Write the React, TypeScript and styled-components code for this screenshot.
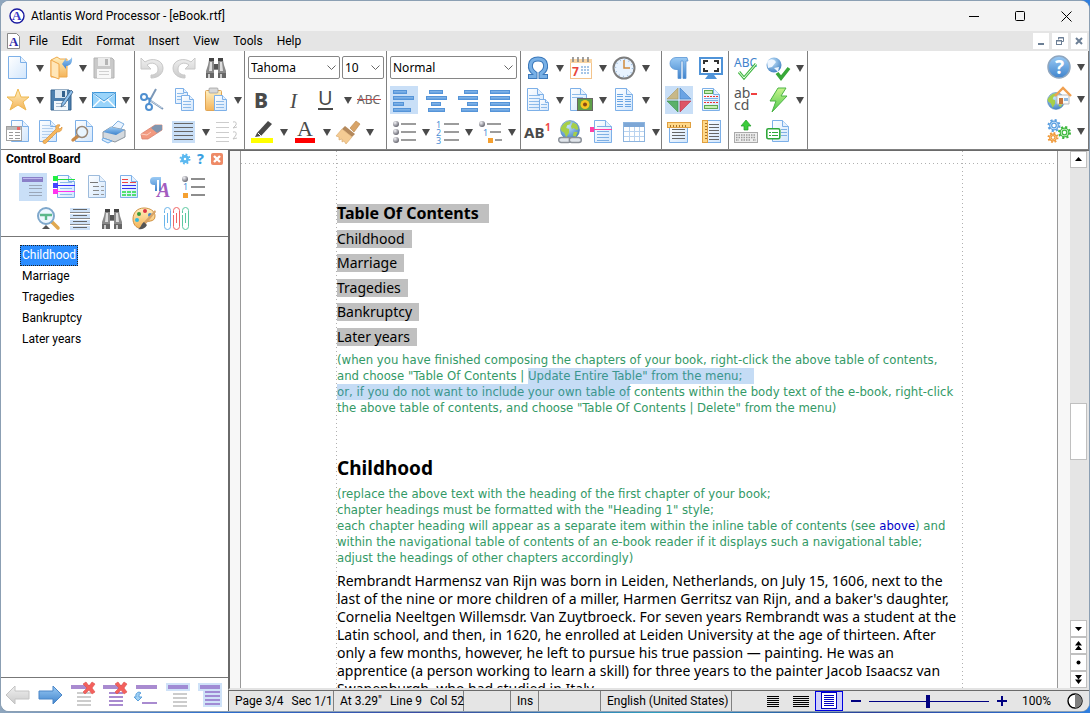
import React from "react";
import styled, { createGlobalStyle } from "styled-components";

const GlobalStyle = createGlobalStyle`
  * { box-sizing: border-box; }
  body {
    margin: 0;
    font-family: Roboto, "Noto Sans", sans-serif;
    font-size: 12px;
    color: #000;
    background: linear-gradient(90deg, #8fa6bd, #2c6fd0 20%, #3c4aa0 40%, #2f9fc0 60%, #2b3f9a 80%, #2f7fe0);
  }
  button, select, input { font: inherit; color: inherit; margin: 0; }
  button { border: 0; padding: 0; background: none; }
  svg { display: block; overflow: visible; }
`;

/* ---------- window frame ---------- */

const Desktop = styled.div`
  height: 100vh;
  padding: 1px 1px 2px;
  display: flex;
`;
const Window = styled.div`
  flex: 1;
  min-width: 0;
  display: flex;
  flex-direction: column;
  background: #fff;
  border-radius: 8px;
  overflow: hidden;
  box-shadow: 0 0 0 1px #8b9fb3;
`;
const TitleBar = styled.header`
  height: 30px;
  flex: none;
  display: flex;
  align-items: center;
  background: #f3f3f3;
  padding-left: 8px;
`;
const Title = styled.h1`
  flex: 1;
  margin: 0 0 0 6px;
  font-size: 12px;
  font-weight: 400;
  white-space: nowrap;
`;
const CaptionButton = styled.button`
  width: 46px;
  height: 30px;
  display: grid;
  place-items: center;
`;
const MenuBar = styled.nav`
  height: 20px;
  flex: none;
  display: flex;
  align-items: center;
  background: #e5e5e5;
  padding: 0 2px 0 5px;
`;
const MenuButton = styled.button`
  padding: 0 7px;
  line-height: 18px;
`;
const Spacer = styled.div`
  flex: 1;
`;
const ChildButton = styled.button`
  width: 16px;
  height: 16px;
  margin-left: 3px;
  background: #fff;
  display: grid;
  place-items: center;
`;

/* ---------- toolbars ---------- */

const Ribbon = styled.div`
  height: 99px;
  flex: none;
  display: flex;
  border-bottom: 1px solid #808080;
  border-right: 1px solid #777;
`;
const Group = styled.div<{ $width: number }>`
  flex: 0 0 ${(p) => p.$width}px;
  min-width: 0;
  padding: 1px 0 0 3px;
  border-right: 1px solid #808080;
`;
const Tools = styled.div`
  display: flex;
  align-items: center;
  height: 32px;
`;
const ToolCell = styled.div<{ $menu?: boolean }>`
  display: flex;
  align-items: center;
  flex: 0 0 ${(p) => (p.$menu ? 43 : 32)}px;
`;
const ToolButton = styled.button<{ $on?: boolean }>`
  width: 28px;
  height: 28px;
  display: grid;
  place-items: center;
  background: ${(p) => (p.$on ? "#c9dff7" : "transparent")};
`;
const DropButton = styled.button`
  width: 15px;
  height: 28px;
  display: grid;
  place-items: center;
`;
const Pickers = styled.div`
  display: flex;
  gap: 2px;
  height: 32px;
  padding-top: 4px;
`;
const SelectBox = styled.div<{ $width: number }>`
  position: relative;
  flex: 0 0 ${(p) => p.$width}px;
`;
const SelectInput = styled.select`
  appearance: none;
  width: 100%;
  height: 23px;
  padding: 0 0 0 2px;
  border: 1px solid #868686;
  border-radius: 2px;
  background: #fff;
  font-family: "Noto Sans", sans-serif;
`;
const SelectChevron = styled.svg`
  position: absolute;
  right: 4px;
  top: 9px;
  pointer-events: none;
`;

/* ---------- main area ---------- */

const Main = styled.div`
  flex: 1;
  min-height: 0;
  display: flex;
`;
const Sidebar = styled.aside`
  flex: 0 0 227px;
  display: flex;
  flex-direction: column;
  background: #fff;
`;
const SideHeader = styled.div`
  display: flex;
  align-items: center;
  height: 21px;
  padding: 0 3px 3px 5px;
`;
const SideTitle = styled.h2`
  flex: 1;
  margin: 0;
  font-size: 12px;
  font-weight: 700;
`;
const SmallButton = styled.button`
  width: 16px;
  height: 16px;
  display: grid;
  place-items: center;
`;
const SideTools = styled.div`
  padding: 0 0 1px 18px;
  border-bottom: 1px solid #777;
  & > :last-child { padding-left: 15px; }
`;
const List = styled.ul`
  flex: 1;
  list-style: none;
  margin: 0;
  padding: 8px 0 0 19px;
`;
const ListItem = styled.li`
  display: flex;
`;
const ListLink = styled.a<{ $on?: boolean }>`
  height: 21px;
  line-height: 19px;
  padding: 0 1px;
  border: 1px dotted ${(p) => (p.$on ? "#222" : "transparent")};
  color: ${(p) => (p.$on ? "#fff" : "#000")};
  background: ${(p) => (p.$on ? "#2a8cff" : "transparent")};
  text-decoration: none;
`;
const SideFooter = styled.div`
  display: flex;
  height: 34px;
  padding-left: 3px;
  align-items: center;
  border-top: 1px solid #777;
`;
const Content = styled.div`
  flex: 1;
  min-width: 0;
  display: flex;
  flex-direction: column;
`;
const Workspace = styled.div`
  flex: 1;
  min-height: 0;
  display: flex;
  border-left: 2px solid #6a6a6a;
  border-top: 1px solid #6a6a6a;
  border-bottom: 2px solid #e3e3e3;
`;
const Canvas = styled.div`
  flex: 1;
  min-width: 0;
  overflow: hidden;
  padding: 0 12px 0 10px;
  background: #f7f7f7;
`;
const Page = styled.div`
  min-height: 100%;
  padding: 0 94px 0 95px;
  background: #fff repeating-linear-gradient(90deg, #b0b0b0 0 1px, transparent 1px 4px) 0 12px / 100% 1px no-repeat;
  border: solid #999;
  border-width: 0 1px;
`;
const PageBody = styled.article`
  --dots: repeating-linear-gradient(#b0b0b0 0 1px, transparent 1px 4px);
  padding: 53px 0 0 1px;
  background: var(--dots) 0 0 / 1px 100% no-repeat, var(--dots) 100% 0 / 1px 100% no-repeat;
  white-space: nowrap;
  font-family: "Noto Sans", sans-serif;
  font-size: 14px;
`;
const Field = styled.span`
  background: #c0c0c0;
  display: block;
  width: max-content;
`;
const TocTitle = styled.h2`
  margin: 0;
  font-size: 16px;
  line-height: 19px;
  ${Field} { padding-right: 10px; }
`;
const Toc = styled.div`
  line-height: 18px;
  ${Field} { padding-right: 7px; margin-top: 7px; }
  ${Field}:nth-child(even) { margin-top: 6px; }
`;
const Note = styled.p`
  margin: 6px 0 0;
  font-family: "DejaVu Sans Condensed", "DejaVu Sans", sans-serif;
  font-size: 13px;
  line-height: 16px;
  color: #339966;
`;
const Marked = styled.mark<{ $tail?: boolean }>`
  display: inline-block;
  height: 16px;
  background: #c5dcf5;
  color: #3a958e;
  padding-right: ${(p) => (p.$tail ? 12 : 0)}px;
`;
const CrossRef = styled.a`
  color: #0000c8;
  text-decoration: none;
`;
const Heading = styled.h2`
  margin: 40px 0 0;
  font-size: 19px;
  line-height: 24px;
`;
const Paragraph = styled.p`
  margin: 6px 0 0;
  line-height: 18px;
`;
const ScrollBar = styled.div`
  flex: 0 0 19px;
  display: flex;
  flex-direction: column;
  background: #e5e5e5;
`;
const ScrollButton = styled.button`
  width: 17px;
  height: 17px;
  background: #fff;
  border: 1px solid #c0c0c0;
  display: grid;
  place-items: center;
`;
const Track = styled.div`
  flex: 1;
  display: grid;
  grid-template-rows: 235fr 57px 160fr;
`;
const Thumb = styled.div`
  grid-row: 2;
  width: 17px;
  background: #fff;
  border: 1px solid #c0c0c0;
`;

/* ---------- status bar ---------- */

const StatusBar = styled.footer`
  flex: none;
  height: 21px;
  display: flex;
  align-items: stretch;
  background: #e5e5e5;
  border-top: 1px solid #6a6a6a;
  border-left: 1px solid #6a6a6a;
`;
const StatusCell = styled.div<{ $width: number }>`
  flex: 0 0 ${(p) => p.$width}px;
  min-width: 0;
  display: flex;
  align-items: center;
  gap: 8px;
  padding-left: 6px;
  border-right: 1px solid #808080;
  white-space: nowrap;
`;
const ViewButton = styled.button<{ $on?: boolean }>`
  width: 28px;
  display: grid;
  place-items: center;
  background: ${(p) => (p.$on ? "#cfcffa" : "transparent")};
  outline: ${(p) => (p.$on ? "1px solid #0000e0" : "0")};
  outline-offset: -1px;
`;
const ZoomButton = styled.button`
  width: 26px;
  display: grid;
  place-items: center;
`;
const ZoomSlider = styled.input`
  appearance: none;
  align-self: center;
  width: 120px;
  height: 14px;
  background: linear-gradient(#000080, #000080) 0 50% / 100% 1px no-repeat;
  &::-webkit-slider-thumb {
    appearance: none;
    width: 4px;
    height: 13px;
    background: #000080;
  }
`;
const ZoomValue = styled.output`
  align-self: center;
  width: 46px;
  padding-left: 7px;
`;
const ContrastButton = styled.button`
  width: 28px;
  display: grid;
  place-items: center;
`;

/* ---------- icon drawings ---------- */

const BLUE = "#6aa5e3";
const GREY = "#8d8d8d";

const Svg = ({ children, size = 24 }: { children: React.ReactNode; size?: number }) => (
  <svg width={size} height={size} viewBox={`0 0 ${size} ${size}`} fill="none" aria-hidden="true">
    {children}
  </svg>
);

const DefsSvg = styled.svg`
  position: absolute;
`;
const Defs = () => (
  <DefsSvg width="0" height="0" aria-hidden="true">
    <defs>
      <linearGradient id="paper" x1="0" y1="0" x2="1" y2="1">
        <stop offset="0" stopColor="#fff" /><stop offset="1" stopColor="#d2e6fc" />
      </linearGradient>
      <linearGradient id="blue" x1="0" y1="0" x2="0" y2="1">
        <stop offset="0" stopColor="#9bcbf5" /><stop offset="1" stopColor="#3f83cc" />
      </linearGradient>
      <linearGradient id="gold" x1="0" y1="0" x2="0" y2="1">
        <stop offset="0" stopColor="#fff0c0" /><stop offset="1" stopColor="#f4b45a" />
      </linearGradient>
      <linearGradient id="silver" x1="0" y1="0" x2="0" y2="1">
        <stop offset="0" stopColor="#f0f0f0" /><stop offset="1" stopColor="#cacaca" />
      </linearGradient>
      <linearGradient id="green" x1="0" y1="0" x2="0" y2="1">
        <stop offset="0" stopColor="#c8f48c" /><stop offset="1" stopColor="#4cc84a" />
      </linearGradient>
      <linearGradient id="bar" x1="0" y1="0" x2="0" y2="1">
        <stop offset="0" stopColor="#8fbdea" /><stop offset="1" stopColor="#5b9ade" />
      </linearGradient>
      <radialGradient id="ball" cx="0.35" cy="0.3" r="0.8">
        <stop offset="0" stopColor="#f4f4f8" /><stop offset="1" stopColor="#55555f" />
      </radialGradient>
      <radialGradient id="sea" cx="0.4" cy="0.3" r="0.8">
        <stop offset="0" stopColor="#c4e4fb" /><stop offset="1" stopColor="#3577bd" />
      </radialGradient>
    </defs>
  </DefsSvg>
);

type DocProps = { x?: number; y?: number; w?: number; h?: number; stroke?: string };
const Doc = ({ x = 3, y = 1, w = 18, h = 22, stroke = "#7db0e8" }: DocProps) => {
  const f = Math.min(6, Math.round(w / 3));
  return (
    <>
      <path d={`M${x + 0.5} ${y + 0.5}h${w - f - 1}l${f} ${f}v${h - f - 1}h${-(w - 1)}z`} fill="url(#paper)" stroke={stroke} />
      <path d={`M${x + w - f - 0.5} ${y + 0.5}v${f}h${f}`} fill="#e6f1fd" stroke={stroke} />
    </>
  );
};
const Lines = ({ x, w, ys, c = BLUE, t = 1 }: { x: number; w: number; ys: number[]; c?: string; t?: number }) => (
  <>{ys.map((y) => <rect key={y} x={x} y={y} width={w} height={t} fill={c} />)}</>
);
const Earth = ({ cx, cy, r }: { cx: number; cy: number; r: number }) => (
  <g transform={`translate(${cx} ${cy}) scale(${r / 10})`}>
    <circle r="10" fill="url(#sea)" stroke="#4a7fb5" strokeWidth="0.6" />
    <path d="M-7-6q4-4 8-3l-1 3-3 1-1 3 3 1v4l-3 5-2-5-3-2-1-3z" fill="#a6cf48" />
    <path d="M3-8l4 2 2 5-2 1-3-2-2 1-1-3z M4 2l4 0-2 5-3-1z" fill="#a6cf48" />
  </g>
);
const Glass = ({ cx, cy, r, hx, hy }: { cx: number; cy: number; r: number; hx: number; hy: number }) => (
  <>
    <path d={`M${cx + Math.sign(hx - cx) * r * 0.7} ${cy + r * 0.7}L${hx} ${hy}`} stroke="#c98a4a" strokeWidth="3.4" strokeLinecap="round" />
    <circle cx={cx} cy={cy} r={r} fill="#e9f5ff" fillOpacity="0.9" stroke="#9a8878" strokeWidth="1.5" />
  </>
);
const Floppy = ({ grey }: { grey?: boolean }) => (
  <>
    <path d="M2 2h18l2 2v18H2z" fill={grey ? "#c9c9c9" : "#4d7fae"} stroke={grey ? "#b3b3b3" : "#33608c"} />
    <rect x="6" y="2" width="12" height="8" fill={grey ? "#ececec" : "#d9e6f2"} />
    <rect x="13" y="3" width="3" height="6" fill={grey ? "#b5b5b5" : "#33608c"} />
    <rect x="5" y="13" width="14" height="9" fill={grey ? "#f8f8f8" : "#f4f8fc"} />
    <Lines x={7} w={10} ys={[15, 18]} c={grey ? "#d0d0d0" : "#a9bccf"} />
  </>
);
const Binoculars = () => (
  <>
    <path d="M5 4h5v5h4V4h5l1 5 2 6v7h-8v-8h-4v8H2v-7l2-6z" fill="#8a8a8a" />
    <path d="M5 2h5v3H5zM14 2h5v3h-5z" fill="#444" />
    <path d="M6 6h2v9H5zM16 6h2l1 9h-3z" fill="#ddd" />
    <path d="M2 17h8v5H2zM14 17h8v5h-8z" fill="#666" />
    <path d="M4 18h2v4H4zM16 18h2v4h-2z" fill="#ccc" />
    <rect x="10" y="8" width="4" height="5" fill="#555" />
  </>
);
const Gear = ({ cx, cy, r, c, fill = "none" }: { cx: number; cy: number; r: number; c: string; fill?: string }) => (
  <>
    <circle cx={cx} cy={cy} r={r} stroke={c} strokeWidth="2" strokeDasharray={`${(r * Math.PI) / 8} ${(r * Math.PI) / 8}`} />
    <circle cx={cx} cy={cy} r={r - 1.2} fill={fill} stroke={c} strokeWidth="1.2" />
    <circle cx={cx} cy={cy} r={r * 0.42} fill="#fff" stroke={c} strokeWidth="1.2" />
  </>
);
const Dots = ({ nums, mixed }: { nums?: boolean; mixed?: boolean }) => (
  <>
    {[4, 12, 20].map((y, i) => (
      <g key={y}>
        {nums || (mixed && i === 1) ? (
          <text x={mixed ? 5 : 1} y={y + 4} fontSize="9" fill="#4c8fd6" fontFamily="Noto Sans">{mixed ? 1 : i + 1}</text>
        ) : mixed && i === 2 ? (
          <rect x="10" y="18" width="5" height="5" fill="#f5a030" />
        ) : (
          <circle cx="4" cy={y} r="3" fill="url(#ball)" />
        )}
        <rect x={mixed ? [9, 12, 17][i] : 9} y={y - 1} width={mixed ? [14, 11, 7][i] : 15} height="2" fill="#9c9c9c" />
      </g>
    ))}
  </>
);
const Align = ({ rows }: { rows: [number, number][] }) => (
  <>{rows.map(([x, w], i) => <rect key={i} x={x + 0.5} y={2.5 + i * 6} width={w} height="3" fill="url(#bar)" stroke="#5594d8" />)}</>
);
const Undo = ({ flip }: { flip?: boolean }) => (
  <g transform={flip ? "translate(24 0) scale(-1 1)" : undefined}>
    <path d="M1 2v11h10l-4-4c5-4 11-1 11 4 0 4-3 6-7 6v3c7 0 12-4 12-10C23 4 12 1 5 6z" fill="url(#silver)" stroke="#c8c8c8" />
  </g>
);
const Cross = () => <path d="M13 1l3-2 3 4 3-4 3 2-3 4 3 4-3 2-3-4-4 4-2-2 4-4z" fill="#f4605c" stroke="#d8504e" strokeWidth="0.6" />;

const I = {
  newDoc: <Svg><Doc x={2} y={0} w={19} h={23} /></Svg>,
  open: (
    <Svg>
      <path d="M2 4l6-3 3 2h7v18H2z" fill="url(#gold)" stroke="#eea94a" />
      <path d="M2 4l8 4v15l-8-3z" fill="#ffe6b8" stroke="#f0a84a" />
      <path d="M13 8l4-6 0 3c3 0 5-2 6-4 1 7-3 9-6 9v3z" fill="url(#blue)" />
    </Svg>
  ),
  saveOff: <Svg><Floppy grey /></Svg>,
  star: <Svg><path d="M12 1l3 8 8 0-6 5 3 8-8-5-8 5 3-8-6-5 8 0z" fill="url(#gold)" stroke="#eeb850" strokeLinejoin="round" /></Svg>,
  saveAs: <Svg><Floppy /><path d="M22 2l2 2-9 13-3 2 1-4z" fill="#8ec1ee" stroke="#3a5c80" strokeWidth="0.8" /></Svg>,
  mail: (
    <Svg>
      <rect x="0.5" y="4.5" width="23" height="15" fill="#9ad4fa" stroke="#3f96d8" />
      <path d="M1 5l11 9L23 5M1 19l8-8M23 19l-8-8" stroke="#fff" strokeWidth="1.4" />
      <path d="M1 5l11 8L23 5" stroke="#3f96d8" />
    </Svg>
  ),
  template: (
    <Svg>
      <Doc x={5} y={0} w={18} h={22} />
      <rect x="0.5" y="6.5" width="15" height="14" fill="#fff" stroke="#a0a0a0" />
      <rect x="1" y="7" width="14" height="3" fill="#bbb" /><rect x="11" y="7" width="3" height="3" fill="#e66" />
      <Lines x={3} w={4} ys={[12, 15, 18]} c="#999" /><Lines x={9} w={5} ys={[12, 15, 18]} c="#999" />
    </Svg>
  ),
  docTools: (
    <Svg>
      <Doc x={1} y={0} w={18} h={22} /><Lines x={4} w={11} ys={[5, 8, 11, 14, 17]} c="#b4cfec" />
      <path d="M7 20L18 9c-1-3 1-5 4-4l-2 3 2 1 2-2c0 4-2 5-5 5L9 22c-1 2-4 2-4 0s1-2 2-2z" fill="#f6b75e" stroke="#d98f35" strokeWidth="0.7" />
    </Svg>
  ),
  preview: <Svg><Doc x={5} y={0} w={18} h={22} /><Glass cx={12} cy={12} r={5.5} hx={3} hy={20} /></Svg>,
  print: (
    <Svg>
      <path d="M9 8l7-7 6 3-5 8z" fill="#eaf4ff" stroke="#7fb0e0" />
      <path d="M1 12l8-5 14 3v7l-10 5-12-4z" fill="#d4d9de" stroke="#8a949e" />
      <path d="M1 12l8-5 14 3-9 5z" fill="url(#blue)" />
      <path d="M1 18l9 3-4 2-6-3z" fill="#d9ecff" stroke="#6faae3" />
    </Svg>
  ),
  undo: <Svg><Undo /></Svg>,
  redo: <Svg><Undo flip /></Svg>,
  find: <Svg><Binoculars /></Svg>,
  cut: (
    <Svg>
      <path d="M8 11L23 21M10 12L16 1" stroke="#7c98b8" strokeWidth="2" />
      <path d="M8 11L22 20" stroke="#c8d6e6" />
      <circle cx="4" cy="9" r="3" stroke="#4f8fd0" strokeWidth="2" /><circle cx="9" cy="19" r="3" stroke="#4f8fd0" strokeWidth="2" />
      <path d="M9 16l1-5-3-1" stroke="#4f8fd0" strokeWidth="2" />
    </Svg>
  ),
  copy: (
    <Svg>
      <Doc x={3} y={0} w={13} h={16} /><Lines x={5} w={7} ys={[5, 8, 11]} c="#8dbbea" />
      <Doc x={9} y={7} w={13} h={16} /><Lines x={11} w={8} ys={[13, 16, 19]} c="#8dbbea" />
    </Svg>
  ),
  paste: (
    <Svg>
      <rect x="1.5" y="2.5" width="16" height="20" rx="1" fill="url(#gold)" stroke="#e0a555" />
      <rect x="5" y="0" width="9" height="5" rx="1" fill="#d8d8d8" stroke="#999" strokeWidth="0.7" />
      <Doc x={10} y={7} w={13} h={16} /><Lines x={12} w={8} ys={[13, 16, 19]} c="#8dbbea" />
    </Svg>
  ),
  eraser: (
    <Svg>
      <path d="M1 14L15 5h7v5L8 19H2z" fill="#f2997f" stroke="#d9806c" strokeWidth="0.8" />
      <path d="M15 5h7v5l-5 3-6-5z" fill="#8096b0" />
      <path d="M1 14l6 1 4-3" stroke="#fbd0c2" />
    </Svg>
  ),
  paraBox: <Svg><rect x="0" y="1" width="23" height="22" fill="#c9dff7" /><Lines x={2} w={19} ys={[3, 7, 11, 15, 19]} c="#666" /></Svg>,
  spacingOff: <Svg><Lines x={1} w={13} ys={[2, 7, 12, 17, 21]} c="#ccc" /><path d="M18 2q4-1 3 3l-3 3 4-1M18 12q4-1 3 3l-3 4 4-1" stroke="#c4c4c4" /></Svg>,
  bold: <Svg><text x="4" y="20" fontSize="21" fontWeight="800" fill="#4a4a4a" fontFamily="Noto Sans">B</text></Svg>,
  italic: <Svg><text x="8" y="20" fontSize="21" fontStyle="italic" fill="#4a4a4a" fontFamily="Liberation Serif">I</text></Svg>,
  underline: <Svg><text x="4" y="17" fontSize="20" fill="#4a4a4a" fontFamily="Noto Sans">U</text><rect x="4" y="20" width="15" height="2" fill="#4a4a4a" /></Svg>,
  strike: <Svg><text x="0" y="16" fontSize="12" fill="#666" fontFamily="Noto Sans">ABC</text><rect x="0" y="11" width="24" height="1" fill="#c04848" /></Svg>,
  marker: <Svg><path d="M7 13L18 1l4 3-11 12-6 1z" fill="#4a4a4a" /><path d="M8 13l3 3" stroke="#fff" /><rect x="1" y="18" width="22" height="5" fill="#ff0" /></Svg>,
  fontColor: <Svg><text x="4" y="16" fontSize="22" fill="#4a4a4a" fontFamily="Liberation Serif">A</text><rect x="2" y="18" width="20" height="5" fill="#f00" /></Svg>,
  brush: (
    <Svg>
      <path d="M14 8l6-7 4 3-6 8z" fill="#d8a468" stroke="#b88444" strokeWidth="0.6" />
      <path d="M9 6l10 8-3 3L6 9z" fill="#b4895c" />
      <path d="M6 9l10 8-6 7-2-3-2 1 0-3-3 1 0-3-3-1z" fill="#f4cb93" stroke="#d9a666" strokeWidth="0.6" />
    </Svg>
  ),
  left: <Svg><Align rows={[[1, 13], [1, 20], [1, 10], [1, 17]]} /></Svg>,
  center: <Svg><Align rows={[[5, 13], [2, 20], [7, 9], [4, 16]]} /></Svg>,
  right: <Svg><Align rows={[[8, 13], [2, 19], [11, 10], [5, 16]]} /></Svg>,
  justify: <Svg><Align rows={[[2, 19], [2, 19], [2, 19], [2, 19]]} /></Svg>,
  bullets: <Svg><Dots /></Svg>,
  numbers: <Svg><Dots nums /></Svg>,
  outline: <Svg><Dots mixed /></Svg>,
  omega: (
    <Svg>
      <path d="M2 20.5h7v-3C2 13 3 3 12 3s10 10 3 14.500v3h7" stroke="#3b78ba" strokeWidth="5" />
      <path d="M3 20.5h6v-3C2 13 3 3 12 3s10 10 3 14.500v3h6" stroke="#78b0e6" strokeWidth="3" />
    </Svg>
  ),
  date: (
    <Svg>
      <rect x="1.5" y="3.5" width="21" height="19" fill="#fff" stroke="#f3c48c" />
      <rect x="1" y="3" width="22" height="4" fill="#f9d5a4" />
      <path d="M4 6V1M9 6V1M14 6V1M19 6V1" stroke="#888" strokeWidth="1.6" />
      <text x="3" y="20" fontSize="12" fontWeight="700" fill="#e8453c" fontFamily="Noto Sans">7</text>
      {[11, 14, 17].map((y) => <path key={y} d={`M12 ${y}h9`} stroke="#8ab4e0" strokeDasharray="2 1" strokeWidth="1.500" />)}
    </Svg>
  ),
  clock: (
    <Svg>
      <circle cx="12" cy="12" r="10.5" fill="#e8f3ff" stroke="#7d7d7d" strokeWidth="2" />
      <circle cx="12" cy="12" r="8.5" stroke="#9cbbdc" strokeDasharray="1 3.450" strokeWidth="1.500" />
      <path d="M12 4v8h6" stroke="#d18b3c" strokeWidth="1.500" />
    </Svg>
  ),
  insertFile: (
    <Svg>
      <Doc x={1} y={0} w={17} h={23} /><Lines x={3} w={11} ys={[7, 10, 13, 16, 19]} c="#8dbbea" />
      <Doc x={13} y={11} w={10} h={12} /><Lines x={15} w={6} ys={[16, 19]} c="#8dbbea" />
    </Svg>
  ),
  insertPic: (
    <Svg>
      <Doc x={1} y={0} w={17} h={23} /><Lines x={3} w={11} ys={[6, 9]} c="#8dbbea" />
      <rect x="8.5" y="10.5" width="15" height="12" fill="#5f9f4a" stroke="#666" />
      <circle cx="16" cy="16.5" r="4.5" fill="#f6c822" /><circle cx="16" cy="16.5" r="2" fill="#8a4a14" />
    </Svg>
  ),
  columns: <Svg><Doc x={3} y={0} w={18} h={23} /><Lines x={5} w={6} ys={[6, 8, 11, 13, 16, 18]} c="#6aa5e3" /><Lines x={13} w={6} ys={[8, 11, 13, 16, 18]} c="#6aa5e3" /></Svg>,
  footnote: (
    <Svg>
      <text x="-2" y="18" fontSize="15" fontWeight="700" fill="#4a4a4a" fontFamily="Noto Sans">AB</text>
      <text x="19" y="11" fontSize="10" fontWeight="700" fill="#f04848" fontFamily="Noto Sans">1</text>
    </Svg>
  ),
  hyperlink: (
    <Svg>
      <Earth cx={12} cy={10} r={9.5} />
      <rect x="0.7" y="17.5" width="12" height="5" rx="2.5" stroke="#8a9098" strokeWidth="1.4" fill="#dfe4ea" />
      <rect x="11.3" y="17.5" width="12" height="5" rx="2.5" stroke="#8a9098" strokeWidth="1.4" fill="#dfe4ea" />
    </Svg>
  ),
  bookmark: (
    <Svg>
      <Doc x={4} y={0} w={18} h={23} /><Lines x={7} w={12} ys={[6, 11, 14, 17, 20]} c="#7fb0e4" />
      <rect x="0" y="7" width="4" height="5" fill="#ff3ea5" /><rect x="4" y="9" width="18" height="1" fill="#ff3ea5" />
    </Svg>
  ),
  table: (
    <Svg>
      <rect x="1.5" y="2.5" width="21" height="19" fill="#fff" stroke="#8db4de" />
      <rect x="2" y="3" width="20" height="4" fill="#7da7d6" />
      <path d="M2 11.5h20M2 16.5h20M7.5 7v14M12.5 7v14M17.5 7v14" stroke="#b9d3ef" />
    </Svg>
  ),
  pilcrow: (
    <Svg>
      <path d="M20 1.500H9a6 6 0 000 12h2v9h3V5h2v17.500h3V5h2z" fill="url(#blue)" stroke="#5a96d4" strokeWidth="0.800" />
    </Svg>
  ),
  fullscreen: (
    <Svg>
      <rect x="1" y="2" width="22" height="16" fill="#fff" stroke="#4f93d8" strokeWidth="2" />
      <path d="M5 8V5h4M15 5h4v3M19 12v3h-4M9 15H5v-3" stroke="#333" strokeWidth="2" />
      <path d="M6 23h12l-3-4H9z" fill="#4f93d8" />
    </Svg>
  ),
  diamond: (
    <Svg>
      <path d="M11 0v11H0z" fill="#c8b888" stroke="#a99a62" strokeWidth="0.600" /><path d="M13 0v11h11z" fill="#6ba4e4" stroke="#3f7fc4" strokeWidth="0.600" />
      <path d="M11 24V13H0z" fill="#5bb06a" stroke="#3a8f4c" strokeWidth="0.600" /><path d="M13 24V13h11z" fill="#dd5566" stroke="#b8384a" strokeWidth="0.600" />
    </Svg>
  ),
  headerFooter: (
    <Svg>
      <Doc x={3} y={0} w={18} h={23} />
      <rect x="5.5" y="2.5" width="8" height="3" fill="#c6f0b4" stroke="#5fa850" /><rect x="5.5" y="17.5" width="13" height="3" fill="#c6f0b4" stroke="#5fa850" />
      <path d="M5 8.500h14M5 14.500h14" stroke="#e33" strokeDasharray="2 1" /><Lines x={5} w={14} ys={[10, 12]} c="#7fb0e4" />
    </Svg>
  ),
  rulerH: (
    <Svg>
      <path d="M2.500 4v18.500h18V4z" fill="url(#paper)" stroke="#7db0e8" /><Lines x={5} w={13} ys={[9, 12, 15, 18]} c="#666" />
      <rect x="0.5" y="2.5" width="23" height="5" fill="#ffd889" stroke="#e0a040" /><path d="M3.500 5v2M6.500 5v2M9.500 5v2M12.500 5v2M15.500 5v2M18.500 5v2" stroke="#a8742a" />
    </Svg>
  ),
  rulerV: (
    <Svg>
      <rect x="3.5" y="0.5" width="18" height="22" fill="url(#paper)" stroke="#7db0e8" /><Lines x={10} w={10} ys={[4, 7, 10, 13, 16, 19]} c="#666" />
      <rect x="3.5" y="0.5" width="5" height="22" fill="#ffd889" stroke="#e0a040" /><path d="M6 3.500h2M6 6.500h2M6 9.500h2M6 12.500h2M6 15.500h2M6 18.500h2" stroke="#a8742a" />
    </Svg>
  ),
  spell: (
    <Svg>
      <text x="0" y="11" fontSize="12" fill="#3f83cc" fontFamily="Noto Sans">ABC</text>
      <path d="M5 16l5 6 12-14" stroke="#48b848" strokeWidth="3" /><path d="M5 16l5 6 12-14" stroke="#e8ffe8" />
    </Svg>
  ),
  webSpell: (
    <Svg>
      <circle cx="8" cy="9" r="7.5" fill="url(#sea)" /><path d="M1 5q6-4 9 1l-4 5-4 1zM8 12l5-1-1 5z" fill="#eef6ff" />
      <path d="M11 17l4 5 8-10" stroke="#38a838" strokeWidth="3.600" />
    </Svg>
  ),
  hyphen: (
    <Svg>
      <text x="0" y="10" fontSize="14" fill="#555" fontFamily="Noto Sans">ab</text><text x="0" y="22" fontSize="14" fill="#555" fontFamily="Noto Sans">cd</text>
      <rect x="17" y="5" width="6" height="2" fill="#f04040" />
    </Svg>
  ),
  bolt: <Svg><path d="M12 0h8l-5 8h6L6 24l4-11H4z" fill="url(#green)" stroke="#4cb446" strokeLinejoin="round" /></Svg>,
  keyboard: (
    <Svg>
      <path d="M12 0l5 6h-3v4h-4V6H7z" fill="#3ccc3c" stroke="#219c27" strokeWidth="0.700" />
      <rect x="0.5" y="12.5" width="23" height="10" fill="#ededed" stroke="#aaa" />
      <path d="M2 15h20M2 17.500h20M2 20h3M7 20h10M19 20h3" stroke="#9a9a9a" strokeDasharray="1.500 1" strokeWidth="1.400" />
    </Svg>
  ),
  autoText: (
    <Svg>
      <Doc x={6} y={0} w={17} h={22} /><Lines x={15} w={6} ys={[9, 12, 15]} c="#7fb0e4" />
      <rect x="0.800" y="8.800" width="13" height="10" rx="1.500" fill="#fff" stroke="#2fa83a" strokeWidth="1.600" />
      <Lines x={3} w={2} ys={[12, 15]} c="#2fa83a" /><Lines x={6} w={6} ys={[12, 15]} c="#2fa83a" />
    </Svg>
  ),
  help: (
    <Svg>
      <circle cx="12" cy="12" r="11" fill="url(#blue)" stroke="#8fa6bf" strokeWidth="1.500" />
      <text x="8" y="19" fontSize="19" fontWeight="700" fill="#fff" fontFamily="Noto Sans">?</text>
    </Svg>
  ),
  home: (
    <Svg>
      <Earth cx={9} cy={14} r={8.5} />
      <path d="M10 8h12v9H10z" fill="#fafafa" stroke="#bbb" /><path d="M8 9l8-8 8 8" stroke="#f0a050" strokeWidth="2.400" />
      <rect x="12" y="11" width="4" height="6" fill="#c4773c" /><rect x="17" y="11" width="4" height="3" fill="#8fb8e0" />
    </Svg>
  ),
  gears: <Svg><Gear cx={7} cy={6.5} r={5.5} c="#5b9fe0" fill="#dcedfd" /><Gear cx={17.5} cy={13.5} r={5.5} c="#3fb83f" fill="#d8f7d4" /><Gear cx={6} cy={18.5} r={4.5} c="#f09a3a" fill="#ffe7c8" /></Svg>,
  panelToc: <Svg><rect x="1" y="2" width="21" height="5" fill="#8a80c8" /><rect x="2" y="3" width="19" height="1" fill="#c0b8ee" /><Lines x={8} w={13} ys={[10, 13, 17, 20]} c="#9aa6b8" /></Svg>,
  panelMarks: (
    <Svg>
      <Doc x={4} y={0} w={18} h={23} />
      <path d="M4 4.500h18" stroke="#2d4" /><path d="M4 10.500h18" stroke="#33f" /><path d="M4 16.500h18" stroke="#f3e" />
      <rect x="0" y="1" width="5" height="5" fill="#2e4" /><rect x="0" y="8" width="5" height="5" fill="#44f" /><rect x="0" y="14" width="5" height="5" fill="#f3e" />
      <Lines x={7} w={12} ys={[7, 13, 19]} c="#8dbbea" />
    </Svg>
  ),
  panelDoc: <Svg><Doc x={3} y={0} w={18} h={23} stroke="#9dbbdc" /><Lines x={5} w={8} ys={[7]} c="#777" /><Lines x={8} w={6} ys={[11, 15, 19]} c="#888" /><Lines x={16} w={3} ys={[11, 15, 19]} c="#999" /></Svg>,
  panelStyles: (
    <Svg>
      <Doc x={3} y={0} w={18} h={23} />
      <Lines x={5} w={6} ys={[4, 7]} c="#e44" /><Lines x={13} w={6} ys={[7]} c="#e44" />
      <Lines x={5} w={14} ys={[10, 13]} c="#33e" />
      <path d="M5 17h14M5 20h14" stroke="#2d4" strokeWidth="1.400" strokeDasharray="4 1" />
    </Svg>
  ),
  panelPara: (
    <Svg>
      <path d="M12 2H5a4 4 0 000 8h1v6h2V5h2v11h2z" fill="url(#blue)" />
      <text x="8" y="22" fontSize="20" fontWeight="700" fontStyle="italic" fill="#a45cc0" fontFamily="Liberation Serif">A</text>
    </Svg>
  ),
  panelList: (
    <Svg>
      <circle cx="4" cy="4" r="3" fill="url(#ball)" /><text x="2" y="15" fontSize="9" fill="#4c8fd6" fontFamily="Noto Sans">1</text>
      <rect x="2" y="18" width="5" height="5" fill="#f5a030" /><Lines x={10} w={14} ys={[3, 11, 19]} c={GREY} t={2} />
    </Svg>
  ),
  panelZoom: (
    <Svg>
      <path d="M16 15l6 6" stroke="#e0a850" strokeWidth="3.500" strokeLinecap="round" />
      <circle cx="10" cy="9" r="8" fill="#eef8ff" stroke="#7fa8cc" strokeWidth="2" />
      <path d="M4 8h12M10 8v5" stroke="#5cb88a" strokeWidth="2.400" /><path d="M6 22h8l-4-4z" fill="#555" />
    </Svg>
  ),
  panelSections: <Svg><Lines x={2} w={20} ys={[1, 7, 13, 19]} c="#cfe2f8" t={4} /><Lines x={5} w={14} ys={[2, 8, 14, 20]} c="#666" /><Lines x={2} w={20} ys={[5, 11, 17]} c="#888" /></Svg>,
  palette: (
    <Svg>
      <path d="M12 1C5 1 1 6 1 12c0 5 3 9 7 9 3 0 2-3 4-5 3-3 11 0 11-7 0-5-5-8-11-8z" fill="url(#gold)" stroke="#cf9040" />
      <circle cx="7" cy="7" r="2" fill="#3a9a3a" /><circle cx="13" cy="4" r="2" fill="#d34" /><circle cx="18" cy="8" r="2" fill="#48c" /><circle cx="5" cy="13" r="2" fill="#3bd" />
      <path d="M23 3l1 2-11 13-2-2z" fill="#d8a468" /><path d="M12 15l3 3c-2 4-6 5-9 4 3-1 3-5 6-7z" fill="#555" />
    </Svg>
  ),
  clips: (
    <Svg>
      {["#6ab4ea", "#f06464", "#5cc8a0"].map((c, i) => (
        <g key={c} transform={`translate(${i * 8 + i} 0)`} stroke={c}>
          <path d="M0.500 6V3.500a3 3 0 016 0v16a3 3 0 01-6 0V8" fill="#fff" /><path d="M3.500 6v10" />
        </g>
      ))}
    </Svg>
  ),
  back: <Svg><path d="M0 12l9-9v5h14v8H9v5z" fill="url(#silver)" stroke="#c4c4c4" /></Svg>,
  forward: <Svg><path d="M24 12l-9-9v5H1v8h14v5z" fill="url(#blue)" stroke="#4a86c8" /></Svg>,
  delOne: <Svg><rect x="1" y="2" width="19" height="4" fill="#a98bd0" /><Lines x={7} w={14} ys={[9, 13, 17, 21]} c="#ccc" t={2} /><Cross /></Svg>,
  delAll: <Svg><rect x="1" y="2" width="19" height="4" fill="#a98bd0" /><Lines x={7} w={14} ys={[9, 13, 17, 21]} c="#a98bd0" t={2} /><Cross /></Svg>,
  demote: <Svg><rect x="2" y="2" width="21" height="4" fill="#a98bd0" /><rect x="8" y="19" width="15" height="2" fill="#a98bd0" /><path d="M5 9q-4 1-3 5h-2l4 4 4-4H5q-1-3 2-4z" fill="#9fd0f4" stroke="#5aa0dc" /></Svg>,
  collapse: <Svg><rect x="0" y="0" width="24" height="8" fill="#cfe2f8" /><rect x="2" y="2" width="20" height="4" fill="#a08bd4" /><Lines x={7} w={14} ys={[10, 14, 18, 22]} c="#ccc" t={2} /></Svg>,
  expand: <Svg><rect x="0" y="0" width="24" height="8" fill="#cfe2f8" /><rect x="5" y="6" width="19" height="18" fill="#cfe2f8" /><rect x="2" y="2" width="20" height="4" fill="#a08bd4" /><Lines x={7} w={15} ys={[8, 12, 16, 20]} c="#a08bd4" t={2} /></Svg>,
};

const Logo = () => (
  <Svg size={16}>
    <circle cx="8" cy="8" r="7" fill="#fff" stroke="#1a1aa0" strokeWidth="1.400" />
    <text x="3" y="12" fontSize="13" fontWeight="700" fill="#3a3ac8" fontFamily="Liberation Serif">A</text>
  </Svg>
);
const DocLogo = () => (
  <Svg size={16}>
    <path d="M1.500 0.500h9l3 3v12h-12z" fill="#fff" stroke="#888" />
    <text x="3" y="13" fontSize="13" fontWeight="700" fill="#2a2aa8" fontFamily="Liberation Serif">A</text>
  </Svg>
);
const Triangle = () => (
  <svg width="8" height="8" viewBox="0 0 8 8" aria-hidden="true"><path d="M0 1h8L4 8z" fill="#4a4a4a" /></svg>
);

type IconName = keyof typeof I;
type ToolSpec = { icon: IconName; label: string; menu?: boolean; on?: boolean };
const t = (icon: IconName, label: string, menu = false, on = false): ToolSpec => ({ icon, label, menu, on });

const ToolRow = ({ items }: { items: ToolSpec[] }) => (
  <Tools>
    {items.map(({ icon, label, menu, on }) => (
      <ToolCell key={label} $menu={menu}>
        <ToolButton $on={on} aria-label={label} title={label}>{I[icon]}</ToolButton>
        {menu && <DropButton aria-label={`${label} options`}><Triangle /></DropButton>}
      </ToolCell>
    ))}
  </Tools>
);

const Picker = ({ label, value, width }: { label: string; value: string; width: number }) => (
  <SelectBox $width={width}>
    <SelectInput aria-label={label} defaultValue={value}><option>{value}</option></SelectInput>
    <SelectChevron width="9" height="6" viewBox="0 0 9 6" fill="none"><path d="M0.500 0.500l4 4 4-4" stroke="#666" /></SelectChevron>
  </SelectBox>
);

const menus = ["File", "Edit", "Format", "Insert", "View", "Tools", "Help"];
const chapters = ["Childhood", "Marriage", "Tragedies", "Bankruptcy", "Later years"];

const TextLines = ({ lines }: { lines: string[] }) => (
  <>{lines.map((line) => <React.Fragment key={line}>{line}<br /></React.Fragment>)}</>
);

const Glyph = ({ d, h = 9 }: { d: string; h?: number }) => (
  <svg width="9" height={h} viewBox={`0 0 9 ${h}`} aria-hidden="true"><path d={d} fill="#000" /></svg>
);

export default function App() {
  return (
    <Desktop>
      <GlobalStyle />
      <Defs />
      <Window>
        <TitleBar>
          <Logo />
          <Title>Atlantis Word Processor - [eBook.rtf]</Title>
          <CaptionButton aria-label="Minimize"><svg width="11" height="11"><path d="M0 5.500h10" stroke="#000" /></svg></CaptionButton>
          <CaptionButton aria-label="Maximize"><svg width="11" height="11"><rect x="0.5" y="0.5" width="9" height="9" rx="1" fill="none" stroke="#000" /></svg></CaptionButton>
          <CaptionButton aria-label="Close"><svg width="11" height="11"><path d="M0.500 0.500l10 10M10.500 0.500l-10 10" stroke="#000" /></svg></CaptionButton>
        </TitleBar>
        <MenuBar>
          <DocLogo />
          {menus.map((m) => <MenuButton key={m}>{m}</MenuButton>)}
          <Spacer />
          <ChildButton aria-label="Minimize document"><svg width="8" height="8"><rect x="1" y="6" width="6" height="2" fill="#6c7f95" /></svg></ChildButton>
          <ChildButton aria-label="Restore document"><svg width="8" height="8" fill="none" stroke="#6c7f95"><path d="M2.500 2.500v-2h5v4h-2M2 1h6M0 4h6" /><rect x="0.5" y="3.5" width="5" height="4" /></svg></ChildButton>
          <ChildButton aria-label="Close document"><svg width="8" height="8"><path d="M1 1l6 6M7 1l-6 6" stroke="#6c7f95" strokeWidth="2" /></svg></ChildButton>
        </MenuBar>

        <Ribbon>
          <Group $width={134}>
            <ToolRow items={[t("newDoc", "New", true), t("open", "Open", true), t("saveOff", "Save")]} />
            <ToolRow items={[t("star", "Favorites", true), t("saveAs", "Save as", true), t("mail", "Mail", true)]} />
            <ToolRow items={[t("template", "Templates"), t("docTools", "Document setup"), t("preview", "Preview"), t("print", "Print")]} />
          </Group>
          <Group $width={110}>
            <ToolRow items={[t("undo", "Undo"), t("redo", "Redo"), t("find", "Find")]} />
            <ToolRow items={[t("cut", "Cut"), t("copy", "Copy"), t("paste", "Paste", true)]} />
            <ToolRow items={[t("eraser", "Erase"), t("paraBox", "Shading", true), t("spacingOff", "Numbering")]} />
          </Group>
          <Group $width={142}>
            <Pickers><Picker label="Font" value="Tahoma" width={92} /><Picker label="Font size" value="10" width={42} /></Pickers>
            <ToolRow items={[t("bold", "Bold"), t("italic", "Italic"), t("underline", "Underline", true), t("strike", "Strikethrough")]} />
            <ToolRow items={[t("marker", "Highlight", true), t("fontColor", "Font color", true), t("brush", "Format brush", true)]} />
          </Group>
          <Group $width={134}>
            <Pickers><Picker label="Style" value="Normal" width={127} /></Pickers>
            <ToolRow items={[t("left", "Align left", false, true), t("center", "Center"), t("right", "Align right"), t("justify", "Justify")]} />
            <ToolRow items={[t("bullets", "Bullets", true), t("numbers", "Numbers", true), t("outline", "Outline list", true)]} />
          </Group>
          <Group $width={141}>
            <ToolRow items={[t("omega", "Symbol", true), t("date", "Date", true), t("clock", "Time", true)]} />
            <ToolRow items={[t("insertFile", "Insert file", true), t("insertPic", "Picture", true), t("columns", "Columns", true)]} />
            <ToolRow items={[t("footnote", "Footnote"), t("hyperlink", "Hyperlink"), t("bookmark", "Bookmark"), t("table", "Table", true)]} />
          </Group>
          <Group $width={67}>
            <ToolRow items={[t("pilcrow", "Special symbols"), t("fullscreen", "Full screen")]} />
            <ToolRow items={[t("diamond", "Control Board", false, true), t("headerFooter", "Headers and footers")]} />
            <ToolRow items={[t("rulerH", "Horizontal ruler"), t("rulerV", "Vertical ruler")]} />
          </Group>
          <Group $width={79}>
            <ToolRow items={[t("spell", "Spelling"), t("webSpell", "Language", true)]} />
            <ToolRow items={[t("hyphen", "Hyphenation"), t("bolt", "Power type", true)]} />
            <ToolRow items={[t("keyboard", "Autocorrect"), t("autoText", "Clip library")]} />
          </Group>
          <Spacer />
          <div>
            <ToolRow items={[t("help", "Help contents", true)]} />
            <ToolRow items={[t("home", "Home page", true)]} />
            <ToolRow items={[t("gears", "Options", true)]} />
          </div>
        </Ribbon>

        <Main>
          <Sidebar>
            <SideHeader>
              <SideTitle>Control Board</SideTitle>
              <SmallButton aria-label="Settings"><Svg size={12}><Gear cx={6} cy={6} r={4.5} c="#5ab8f0" fill="#5ab8f0" /></Svg></SmallButton>
              <SmallButton aria-label="Board help"><Svg size={12}><text x="2" y="11" fontSize="14" fontWeight="800" fill="#3aa0e0" fontFamily="Noto Sans">?</text></Svg></SmallButton>
              <SmallButton aria-label="Close board"><Svg size={12}><rect width="12" height="12" rx="2" fill="#ee8a66" /><path d="M3 3l6 6M9 3l-6 6" stroke="#fff" strokeWidth="2.400" /></Svg></SmallButton>
            </SideHeader>
            <SideTools>
              <ToolRow items={[t("panelToc", "Headings", false, true), t("panelMarks", "Bookmarks"), t("panelDoc", "Sections"), t("panelStyles", "Fields"), t("panelPara", "Styles"), t("panelList", "Lists")]} />
              <ToolRow items={[t("panelZoom", "Search"), t("panelSections", "Paragraphs"), t("find", "Find text"), t("palette", "Colors"), t("clips", "Clips")]} />
            </SideTools>
            <List>
              {chapters.map((c, i) => <ListItem key={c}><ListLink href="#childhood" $on={i === 0}>{c}</ListLink></ListItem>)}
            </List>
            <SideFooter>
              <ToolRow items={[t("back", "Back"), t("forward", "Forward"), t("delOne", "Delete heading"), t("delAll", "Delete section"), t("demote", "Demote"), t("collapse", "Collapse"), t("expand", "Expand")]} />
            </SideFooter>
          </Sidebar>

          <Content>
            <Workspace>
              <Canvas>
                <Page>
                  <PageBody>
                    <TocTitle><Field>Table Of Contents</Field></TocTitle>
                    <Toc>{chapters.map((c) => <Field key={c}>{c}</Field>)}</Toc>
                    <Note>
                      (when you have finished composing the chapters of your book, right-click the above table of contents,<br />
                      and choose "Table Of Contents | <Marked $tail>Update Entire Table" from the menu;</Marked><br />
                      <Marked>or, if you do not want to include your own table of</Marked> contents within the body text of the e-book, right-click<br />
                      the above table of contents, and choose "Table Of Contents | Delete" from the menu)
                    </Note>
                    <Heading id="childhood">Childhood</Heading>
                    <Note>
                      (replace the above text with the heading of the first chapter of your book;<br />
                      chapter headings must be formatted with the "Heading 1" style;<br />
                      each chapter heading will appear as a separate item within the inline table of contents (see <CrossRef href="#childhood">above</CrossRef>) and<br />
                      within the navigational table of contents of an e-book reader if it displays such a navigational table;<br />
                      adjust the headings of other chapters accordingly)
                    </Note>
                    <Paragraph>
                      <TextLines
                        lines={[
                          "Rembrandt Harmensz van Rijn was born in Leiden, Netherlands, on July 15, 1606, next to the",
                          "last of the nine or more children of a miller, Harmen Gerritsz van Rijn, and a baker's daughter,",
                          "Cornelia Neeltgen Willemsdr. Van Zuytbroeck. For seven years Rembrandt was a student at the",
                          "Latin school, and then, in 1620, he enrolled at Leiden University at the age of thirteen. After",
                          "only a few months, however, he left to pursue his true passion — painting. He was an",
                          "apprentice (a person working to learn a skill) for three years to the painter Jacob Isaacsz van",
                          "Swanenburgh, who had studied in Italy.",
                        ]}
                      />
                    </Paragraph>
                  </PageBody>
                </Page>
              </Canvas>
              <ScrollBar>
                <ScrollButton aria-label="Scroll up"><Glyph d="M1 6h7L4.500 2z" /></ScrollButton>
                <Track><Thumb /></Track>
                <ScrollButton aria-label="Scroll down"><Glyph d="M1 3h7L4.500 7z" /></ScrollButton>
                <ScrollButton aria-label="Previous page"><Glyph d="M1 4.500h7L4.500 0zM1 9h7L4.500 4.500z" /></ScrollButton>
                <ScrollButton aria-label="Browse by"><Glyph d="M4.500 2.500a2 2 0 110 4 2 2 0 010-4z" /></ScrollButton>
                <ScrollButton aria-label="Next page"><Glyph d="M1 0h7L4.500 4.500zM1 4.500h7L4.500 9z" /></ScrollButton>
              </ScrollBar>
            </Workspace>
            <StatusBar>
              <StatusCell $width={105}><span>Page 3/4</span><span>Sec 1/1</span></StatusCell>
              <StatusCell $width={130}><span>At 3.29"</span><span>Line 9</span><span>Col 52</span></StatusCell>
              <StatusCell $width={47} />
              <StatusCell $width={28}>Ins</StatusCell>
              <StatusCell $width={62} />
              <StatusCell $width={131}>English (United States)</StatusCell>
              <Spacer />
              <ViewButton aria-label="Draft view"><svg width="12" height="12"><path d="M0 1.500h12M0 3.500h12M0 5.500h12M0 7.500h12M0 9.500h12M0 11.500h12" stroke="#000" /></svg></ViewButton>
              <ViewButton aria-label="Online view"><svg width="16" height="12"><path d="M0 1.500h16M0 3.500h16M0 5.500h16M0 7.500h16M0 9.500h16M0 11.500h16" stroke="#000" /></svg></ViewButton>
              <ViewButton $on aria-label="Print view"><svg width="16" height="18" fill="none" stroke="#0000c0"><rect x="0.5" y="0.5" width="15" height="16" fill="#fff" /><path d="M3 3.500h10M3 5.500h10M3 7.500h10M3 9.500h10M3 11.500h10M3 13.500h10" /></svg></ViewButton>
              <ZoomButton aria-label="Zoom out"><svg width="10" height="10"><rect y="4" width="10" height="2" fill="#000080" /></svg></ZoomButton>
              <ZoomSlider type="range" aria-label="Zoom" min={0} max={200} defaultValue={98} />
              <ZoomButton aria-label="Zoom in"><svg width="10" height="10"><path d="M0 5h10M5 0v10" stroke="#000080" strokeWidth="2" /></svg></ZoomButton>
              <ZoomValue>100%</ZoomValue>
              <ContrastButton aria-label="Contrast"><svg width="16" height="16"><circle cx="8" cy="8" r="7" fill="#fff" stroke="#000" strokeWidth="1.400" /><path d="M8 1a7 7 0 010 14z" fill="#808080" /></svg></ContrastButton>
            </StatusBar>
          </Content>
        </Main>
      </Window>
    </Desktop>
  );
}
